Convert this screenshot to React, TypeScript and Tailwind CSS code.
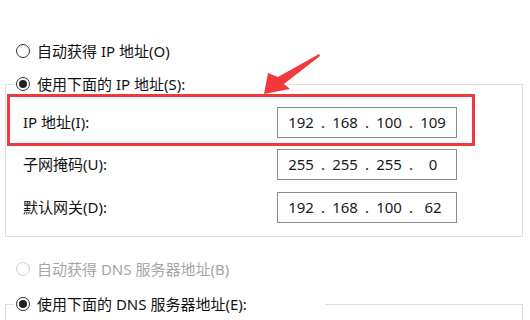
import * as React from "react";

const FONT = "font-['Noto_Sans','Noto_Sans_CJK_SC',sans-serif]";

function Radio({ checked, disabled }: { checked?: boolean; disabled?: boolean }) {
  return (
    <span
      className={`flex h-[14px] w-[14px] shrink-0 items-center justify-center rounded-full border bg-white ${
        disabled ? "border-[#cfcfcf]" : "border-[#333333]"
      }`}
    >
      {checked && <span className="h-[8px] w-[8px] rounded-full bg-[#222222]" />}
    </span>
  );
}

function RadioLabel({ text, checked, disabled }: { text: string; checked?: boolean; disabled?: boolean }) {
  return (
    <div className="flex h-5 items-center gap-[7px]">
      <Radio checked={checked} disabled={disabled} />
      <span className={`text-[15px] leading-5 whitespace-nowrap ${disabled ? "text-[#a6a6a6]" : "text-[#111]"}`}>{text}</span>
    </div>
  );
}

function IpField({ parts }: { parts: string[] }) {
  return (
    <div className="flex h-[31px] w-[180px] items-center border border-[#8c8c8c] bg-white pl-[5px] text-[15px] text-[#1a1a1a]">
      {parts.map((p, i) => (
        <React.Fragment key={i}>
          {i > 0 && <span className="w-[8px] text-center">.</span>}
          <span className="w-[36px] text-center">{p}</span>
        </React.Fragment>
      ))}
    </div>
  );
}

const ROWS = [
  { label: "IP 地址(I):", parts: ["192", "168", "100", "109"] },
  { label: "子网掩码(U):", parts: ["255", "255", "255", "0"] },
  { label: "默认网关(D):", parts: ["192", "168", "100", "62"] },
];

export default function App() {
  return (
    <div className={`relative h-[320px] w-[530px] overflow-hidden bg-white pt-[41px] ${FONT}`}>
      <div className="pl-[16px]">
        <RadioLabel text="自动获得 IP 地址(O)" />
      </div>

      <fieldset className="mt-[13px] ml-[5px] w-[518px] border border-[#dedede] pb-[13px]">
        <legend className="ml-[8px] w-[275px] pl-[2px]">
          <RadioLabel text="使用下面的 IP 地址(S):" checked />
        </legend>

        <div className="ml-[1px] w-[468px] border-[3px] border-[#ef393d] pt-[10px] pb-[5px] pl-[13px]">
          <div className="flex items-center">
            <span className="w-[254px] text-[15px] text-[#111]">{ROWS[0].label}</span>
            <IpField parts={ROWS[0].parts} />
          </div>
        </div>

        {ROWS.slice(1).map((r, i) => (
          <div key={r.label} className={`flex items-center pl-[17px] ${i === 0 ? "mt-[3px]" : "mt-[12px]"}`}>
            <span className="w-[254px] text-[15px] text-[#111]">{r.label}</span>
            <IpField parts={r.parts} />
          </div>
        ))}
      </fieldset>

      <div className="mt-[22px] pl-[16px]">
        <RadioLabel text="自动获得 DNS 服务器地址(B)" disabled />
      </div>

      <fieldset className="mt-[15px] ml-[5px] h-[80px] w-[518px] border border-[#dedede]">
        <legend className="ml-[8px] w-[311px] pl-[2px]">
          <RadioLabel text="使用下面的 DNS 服务器地址(E):" checked />
        </legend>
      </fieldset>

      {/* annotation arrow */}
      <svg className="absolute left-[260px] top-[50px]" width="65" height="50" viewBox="0 0 65 50">
        <polygon points="59,4 18,27 8,23 4,44 30,39 24,34 60,6" fill="#f03a3d" />
      </svg>
    </div>
  );
}
